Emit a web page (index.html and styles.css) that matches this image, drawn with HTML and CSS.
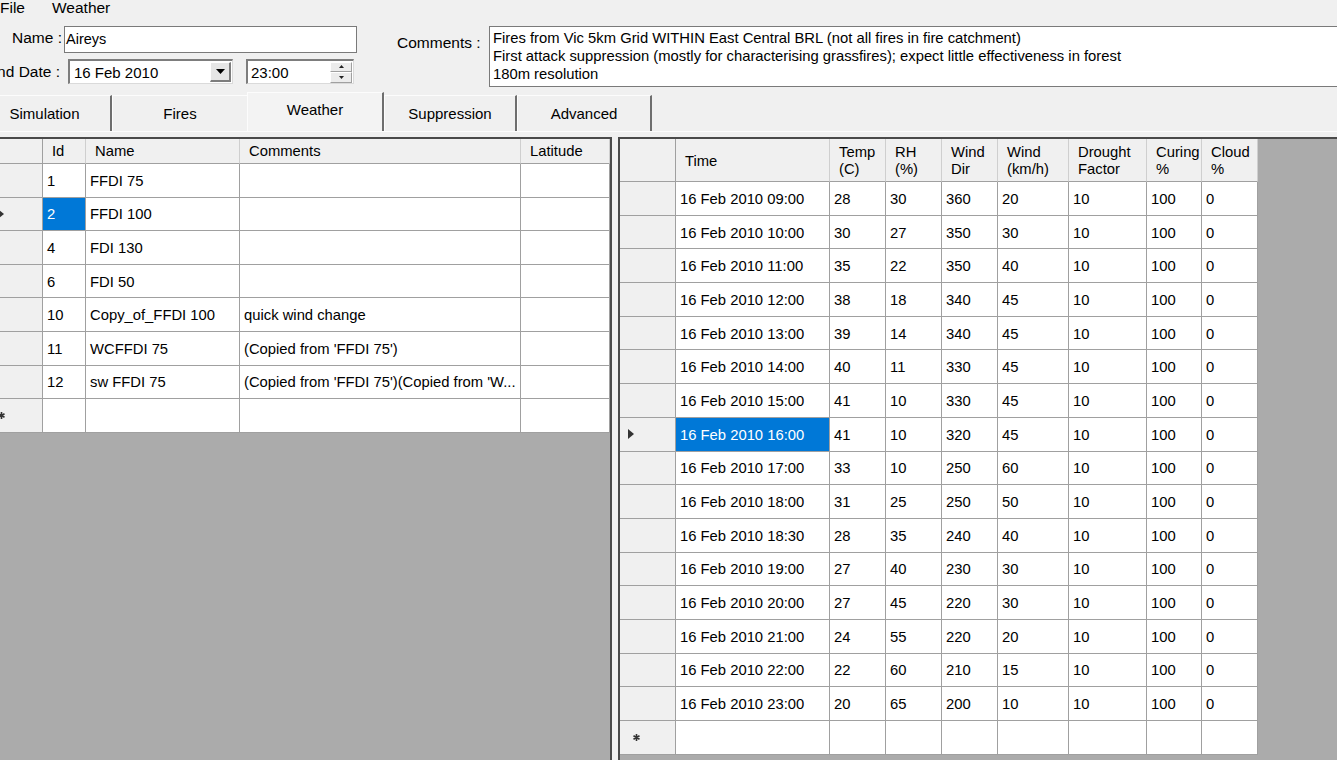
FILE: index.html
```html
<!DOCTYPE html>
<html>
<head>
<meta charset="utf-8">
<title>Weather</title>
<link rel="stylesheet" href="styles.css">
</head>
<body>
<div class="app">
  <div class="menubar">
    <span class="menu-item">File</span>
    <span class="menu-item">Weather</span>
  </div>

  <div class="form">
    <div class="fields">
      <div class="field-row">
        <div class="lbl-box name-lbl"><span class="lbl">Name :</span></div>
        <div class="textbox name-box">Aireys</div>
      </div>
      <div class="field-row">
        <div class="lbl-box date-lbl"><span class="lbl">End Date :</span></div>
        <div class="datepicker">
          <span class="dp-text">16 Feb 2010</span>
          <span class="dd-btn"><svg width="9" height="5" viewBox="0 0 9 5"><path d="M0 0H9L4.5 5Z" fill="#000"/></svg></span>
        </div>
        <div class="timebox">
          <span class="dp-text">23:00</span>
          <span class="spin">
            <span class="spin-btn"><svg width="5" height="3" viewBox="0 0 5 3"><path d="M0 3H5L2.5 0Z" fill="#222"/></svg></span>
            <span class="spin-btn"><svg width="5" height="3" viewBox="0 0 5 3"><path d="M0 0H5L2.5 3Z" fill="#222"/></svg></span>
          </span>
        </div>
      </div>
    </div>
    <div class="comments">
      <span class="lbl comments-lbl">Comments :</span>
      <div class="textarea">
        <div>Fires from Vic 5km Grid WITHIN East Central BRL (not all fires in fire catchment)</div>
        <div>First attack suppression (mostly for characterising grassfires); expect little effectiveness in forest</div>
        <div>180m resolution</div>
      </div>
    </div>
  </div>

  <div class="tabs">
    <div class="tab t-sim">Simulation</div>
    <div class="tab t-fires">Fires</div>
    <div class="tab t-weather active">Weather</div>
    <div class="tab t-supp">Suppression</div>
    <div class="tab t-adv">Advanced</div>
  </div>

  <div class="page">
    <div class="panel left-panel">
      <div class="lgrid">
        <div class="rh hd"></div><div class="hd">Id</div><div class="hd">Name</div><div class="hd">Comments</div><div class="hd">Latitude</div>

        <div class="rh"></div><div class="c">1</div><div class="c">FFDI 75</div><div class="c"></div><div class="c"></div>
        <div class="rh"><svg class="ind" width="6" height="10" viewBox="0 0 6 10"><path d="M0 0L6 5L0 10Z" fill="#333"/></svg></div><div class="c sel">2</div><div class="c">FFDI 100</div><div class="c"></div><div class="c"></div>
        <div class="rh"></div><div class="c">4</div><div class="c">FDI 130</div><div class="c"></div><div class="c"></div>
        <div class="rh"></div><div class="c">6</div><div class="c">FDI 50</div><div class="c"></div><div class="c"></div>
        <div class="rh"></div><div class="c">10</div><div class="c">Copy_of_FFDI 100</div><div class="c">quick wind change</div><div class="c"></div>
        <div class="rh"></div><div class="c">11</div><div class="c">WCFFDI 75</div><div class="c">(Copied from 'FFDI 75')</div><div class="c"></div>
        <div class="rh"></div><div class="c">12</div><div class="c">sw FFDI 75</div><div class="c">(Copied from 'FFDI 75')(Copied from 'W...</div><div class="c"></div>
        <div class="rh"><svg class="star" width="7" height="7" viewBox="0 0 7 7"><path d="M3.5 0V7M0.5 1.75L6.5 5.25M0.5 5.25L6.5 1.75" stroke="#333" stroke-width="1.6"/></svg></div><div class="c"></div><div class="c"></div><div class="c"></div><div class="c"></div>
      </div>
    </div>

    <div class="splitter"></div>

    <div class="panel right-panel">
      <div class="rgrid">
        <div class="rh hd"></div><div class="hd">Time</div><div class="hd">Temp<br>(C)</div><div class="hd">RH<br>(%)</div><div class="hd">Wind<br>Dir</div><div class="hd">Wind<br>(km/h)</div><div class="hd">Drought<br>Factor</div><div class="hd">Curing<br>%</div><div class="hd">Cloud<br>%</div>

        <div class="rh"></div><div class="c">16 Feb 2010 09:00</div><div class="c">28</div><div class="c">30</div><div class="c">360</div><div class="c">20</div><div class="c">10</div><div class="c">100</div><div class="c">0</div>
        <div class="rh"></div><div class="c">16 Feb 2010 10:00</div><div class="c">30</div><div class="c">27</div><div class="c">350</div><div class="c">30</div><div class="c">10</div><div class="c">100</div><div class="c">0</div>
        <div class="rh"></div><div class="c">16 Feb 2010 11:00</div><div class="c">35</div><div class="c">22</div><div class="c">350</div><div class="c">40</div><div class="c">10</div><div class="c">100</div><div class="c">0</div>
        <div class="rh"></div><div class="c">16 Feb 2010 12:00</div><div class="c">38</div><div class="c">18</div><div class="c">340</div><div class="c">45</div><div class="c">10</div><div class="c">100</div><div class="c">0</div>
        <div class="rh"></div><div class="c">16 Feb 2010 13:00</div><div class="c">39</div><div class="c">14</div><div class="c">340</div><div class="c">45</div><div class="c">10</div><div class="c">100</div><div class="c">0</div>
        <div class="rh"></div><div class="c">16 Feb 2010 14:00</div><div class="c">40</div><div class="c">11</div><div class="c">330</div><div class="c">45</div><div class="c">10</div><div class="c">100</div><div class="c">0</div>
        <div class="rh"></div><div class="c">16 Feb 2010 15:00</div><div class="c">41</div><div class="c">10</div><div class="c">330</div><div class="c">45</div><div class="c">10</div><div class="c">100</div><div class="c">0</div>
        <div class="rh"><svg class="ind" width="6" height="10" viewBox="0 0 6 10"><path d="M0 0L6 5L0 10Z" fill="#333"/></svg></div><div class="c sel">16 Feb 2010 16:00</div><div class="c">41</div><div class="c">10</div><div class="c">320</div><div class="c">45</div><div class="c">10</div><div class="c">100</div><div class="c">0</div>
        <div class="rh"></div><div class="c">16 Feb 2010 17:00</div><div class="c">33</div><div class="c">10</div><div class="c">250</div><div class="c">60</div><div class="c">10</div><div class="c">100</div><div class="c">0</div>
        <div class="rh"></div><div class="c">16 Feb 2010 18:00</div><div class="c">31</div><div class="c">25</div><div class="c">250</div><div class="c">50</div><div class="c">10</div><div class="c">100</div><div class="c">0</div>
        <div class="rh"></div><div class="c">16 Feb 2010 18:30</div><div class="c">28</div><div class="c">35</div><div class="c">240</div><div class="c">40</div><div class="c">10</div><div class="c">100</div><div class="c">0</div>
        <div class="rh"></div><div class="c">16 Feb 2010 19:00</div><div class="c">27</div><div class="c">40</div><div class="c">230</div><div class="c">30</div><div class="c">10</div><div class="c">100</div><div class="c">0</div>
        <div class="rh"></div><div class="c">16 Feb 2010 20:00</div><div class="c">27</div><div class="c">45</div><div class="c">220</div><div class="c">30</div><div class="c">10</div><div class="c">100</div><div class="c">0</div>
        <div class="rh"></div><div class="c">16 Feb 2010 21:00</div><div class="c">24</div><div class="c">55</div><div class="c">220</div><div class="c">20</div><div class="c">10</div><div class="c">100</div><div class="c">0</div>
        <div class="rh"></div><div class="c">16 Feb 2010 22:00</div><div class="c">22</div><div class="c">60</div><div class="c">210</div><div class="c">15</div><div class="c">10</div><div class="c">100</div><div class="c">0</div>
        <div class="rh"></div><div class="c">16 Feb 2010 23:00</div><div class="c">20</div><div class="c">65</div><div class="c">200</div><div class="c">10</div><div class="c">10</div><div class="c">100</div><div class="c">0</div>
        <div class="rh"><svg class="star" width="7" height="7" viewBox="0 0 7 7"><path d="M3.5 0V7M0.5 1.75L6.5 5.25M0.5 5.25L6.5 1.75" stroke="#333" stroke-width="1.6"/></svg></div><div class="c"></div><div class="c"></div><div class="c"></div><div class="c"></div><div class="c"></div><div class="c"></div><div class="c"></div><div class="c"></div>
      </div>
    </div>
  </div>
</div>
</body>
</html>
```

FILE: styles.css
```css
* { box-sizing: border-box; margin: 0; padding: 0; }

html, body {
  width: 1337px;
  height: 760px;
  overflow: hidden;
}

body {
  background: #f0f0f0;
  font-family: "Liberation Sans", Arial, sans-serif;
  color: #000;
}

.app {
  width: 1337px;
  height: 760px;
  overflow: hidden;
}

/* ---------- menu ---------- */
.menubar {
  display: flex;
  height: 19px;
  align-items: flex-start;
  font-size: 15.5px;
  line-height: 15px;
}
.menu-item + .menu-item { margin-left: 27px; }

/* ---------- form ---------- */
.form {
  display: flex;
  height: 73px;
  padding-top: 7px;
}
.fields {
  width: 360px;
  flex: none;
  display: flex;
  flex-direction: column;
  gap: 6px;
}
.field-row {
  display: flex;
  align-items: center;
}
.lbl {
  font-size: 15.5px;
  white-space: nowrap;
}
.lbl-box {
  display: flex;
  justify-content: flex-end;
  flex: none;
}
.name-lbl { width: 62px; margin-right: 2px; padding-bottom: 3px; }
.date-lbl { width: 60px; margin-right: 8px; }

.textbox {
  background: #fff;
  border: 1px solid #7a7a7a;
  font-size: 14.5px;
  display: flex;
  align-items: center;
}
.name-box {
  width: 293px;
  height: 27px;
  padding-left: 1px;
  padding-bottom: 1px;
}

.datepicker, .timebox {
  display: flex;
  align-items: center;
  background: #fff;
  height: 25px;
  border-style: solid;
  border-width: 2px 1px 1px 2px;
  border-color: #7d7d7d #dadada #dadada #7d7d7d;
  font-size: 15px;
}
.datepicker {
  width: 165px;
  padding-left: 4px;
  padding-right: 1px;
}
.timebox {
  width: 108px;
  margin-left: 13px;
  padding-left: 3px;
  padding-right: 1px;
}
.dp-text { flex: 1; }

.dd-btn {
  width: 21px;
  height: 20px;
  background: #e6e6e6;
  border-style: solid;
  border-width: 1px 2px 2px 1px;
  border-color: #fff #7d7d7d #7d7d7d #fff;
  display: flex;
  align-items: center;
  justify-content: center;
}
.spin {
  width: 22px;
  height: 21px;
  display: flex;
  flex-direction: column;
}
.spin-btn {
  flex: 1;
  background: #ececec;
  border-style: solid;
  border-width: 1px;
  border-color: #fff #a0a0a0 #a0a0a0 #fff;
  display: flex;
  align-items: center;
  justify-content: center;
}

.comments {
  display: flex;
  flex: 1;
  margin-left: 37px;
  margin-right: -20px;
}
.comments-lbl {
  width: 83px;
  margin-right: 9px;
  padding-top: 8px;
  line-height: 18px;
}
.textarea {
  flex: 1;
  height: 61px;
  background: #fff;
  border: 1px solid #7a7a7a;
  padding: 2px 3px;
  font-size: 14.8px;
  line-height: 18px;
  white-space: nowrap;
}

/* ---------- tabs ---------- */
.tabs {
  display: flex;
  align-items: flex-end;
  height: 39px;
  margin-left: -22px;
}
.tab {
  height: 36px;
  display: flex;
  align-items: center;
  justify-content: center;
  font-size: 15px;
  background: #f0f0f0;
  border-top: 1px solid #fcfcfc;
  border-left: 1px solid #fcfcfc;
  border-right: 2px solid #6e6e6e;
}
.t-sim { width: 134px; }
.t-fires { width: 135px; border-right: none; }
.t-weather { width: 137px; }
.t-supp { width: 133px; }
.t-adv { width: 135px; }
.tab.active {
  height: 39px;
  padding-bottom: 6px;
  background: #f3f3f3;
}

/* ---------- page ---------- */
.page {
  display: flex;
  height: 629px;
  border-top: 1px solid #fcfcfc;
  padding-top: 5px;
}
.panel {
  background: #ababab;
  height: 640px;
  border-top: 2px solid #4a4a4a;
  flex: none;
  overflow: hidden;
}
.left-panel {
  width: 627px;
  margin-left: -15px;
  border-right: 2px solid #4a4a4a;
}
.splitter {
  width: 6px;
  flex: none;
}
.right-panel {
  flex: 1;
  border-left: 2px solid #4a4a4a;
}

/* ---------- grids ---------- */
.lgrid, .rgrid {
  display: grid;
  font-size: 14.8px;
  background: #fff;
}
.lgrid {
  width: 625px;
  grid-template-columns: 58px 43px 154px 281px 89px;
  grid-template-rows: 25px repeat(8, 33.6px);
}
.rgrid {
  width: 638px;
  grid-template-columns: 56px 154px 56px 56px 56px 71px 78px 55px 56px;
  grid-template-rows: 43px repeat(17, 33.7px);
}

.c, .hd, .rh {
  border-right: 1px solid #a0a0a0;
  border-bottom: 1px solid #a0a0a0;
  display: flex;
  align-items: center;
  white-space: nowrap;
  overflow: hidden;
}
.c {
  padding-left: 4px;
  padding-top: 1px;
  background: #fff;
}
.hd {
  background: #f0f0f0;
  padding-left: 9px;
  line-height: 17px;
  border-right-color: #cfcfcf;
}
.rgrid .hd { padding-top: 2px; }
.rh {
  background: #f0f0f0;
  padding-left: 8px;
}
.hd.rh { border-right-color: #a0a0a0; }
.lgrid .rh { padding-left: 13px; }

.c.sel {
  background: #0078d7;
  color: #fff;
}
.ind { display: block; }
.star { display: block; margin-left: 5px; }
.lgrid .star { margin-left: 0; }
```
